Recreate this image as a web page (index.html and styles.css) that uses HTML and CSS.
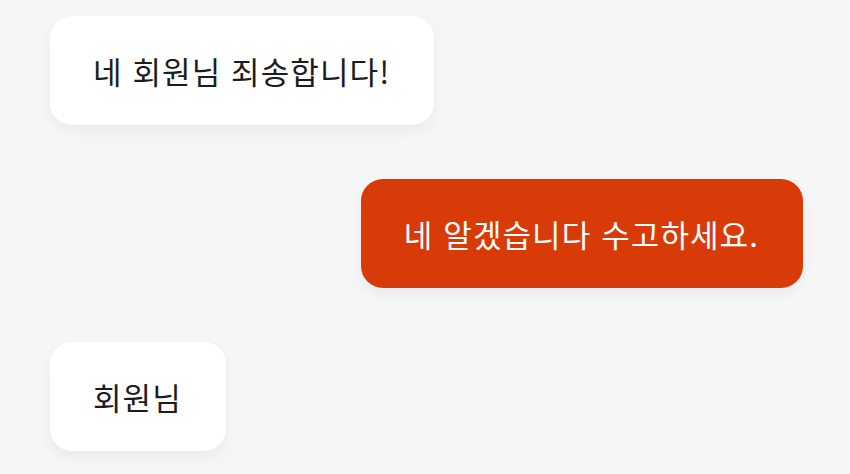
FILE: index.html
```html
<!DOCTYPE html>
<html lang="ko">
<head>
<meta charset="utf-8">
<link rel="stylesheet" href="styles.css">
</head>
<body>
<div class="chat">
  <div class="bubble in">네 회원님 죄송합니다!</div>
  <div class="bubble out">네 알겠습니다 수고하세요.</div>
  <div class="bubble in">회원님</div>
</div>
</body>
</html>
```
FILE: styles.css
```css
html, body {
  margin: 0;
  padding: 0;
  background: #f6f6f7;
  width: 850px;
  height: 474px;
  overflow: hidden;
}
.chat {
  display: flex;
  flex-direction: column;
  gap: 54px;
  padding: 16px 47px 0 50px;
  font-family: "Noto Sans CJK KR", "Noto Sans", sans-serif;
}
.bubble {
  box-sizing: border-box;
  height: 109px;
  display: flex;
  align-items: center;
  padding: 0 44px 0 43px;
  border-radius: 22px;
  font-size: 31px;
  letter-spacing: 1.1px;
  box-shadow: 0 6px 14px rgba(0, 0, 0, 0.05);
}
.in {
  align-self: flex-start;
  background: #ffffff;
  color: #1c1c1c;
}
.out {
  align-self: flex-end;
  background: #d83a08;
  color: #ffffff;
}
```
